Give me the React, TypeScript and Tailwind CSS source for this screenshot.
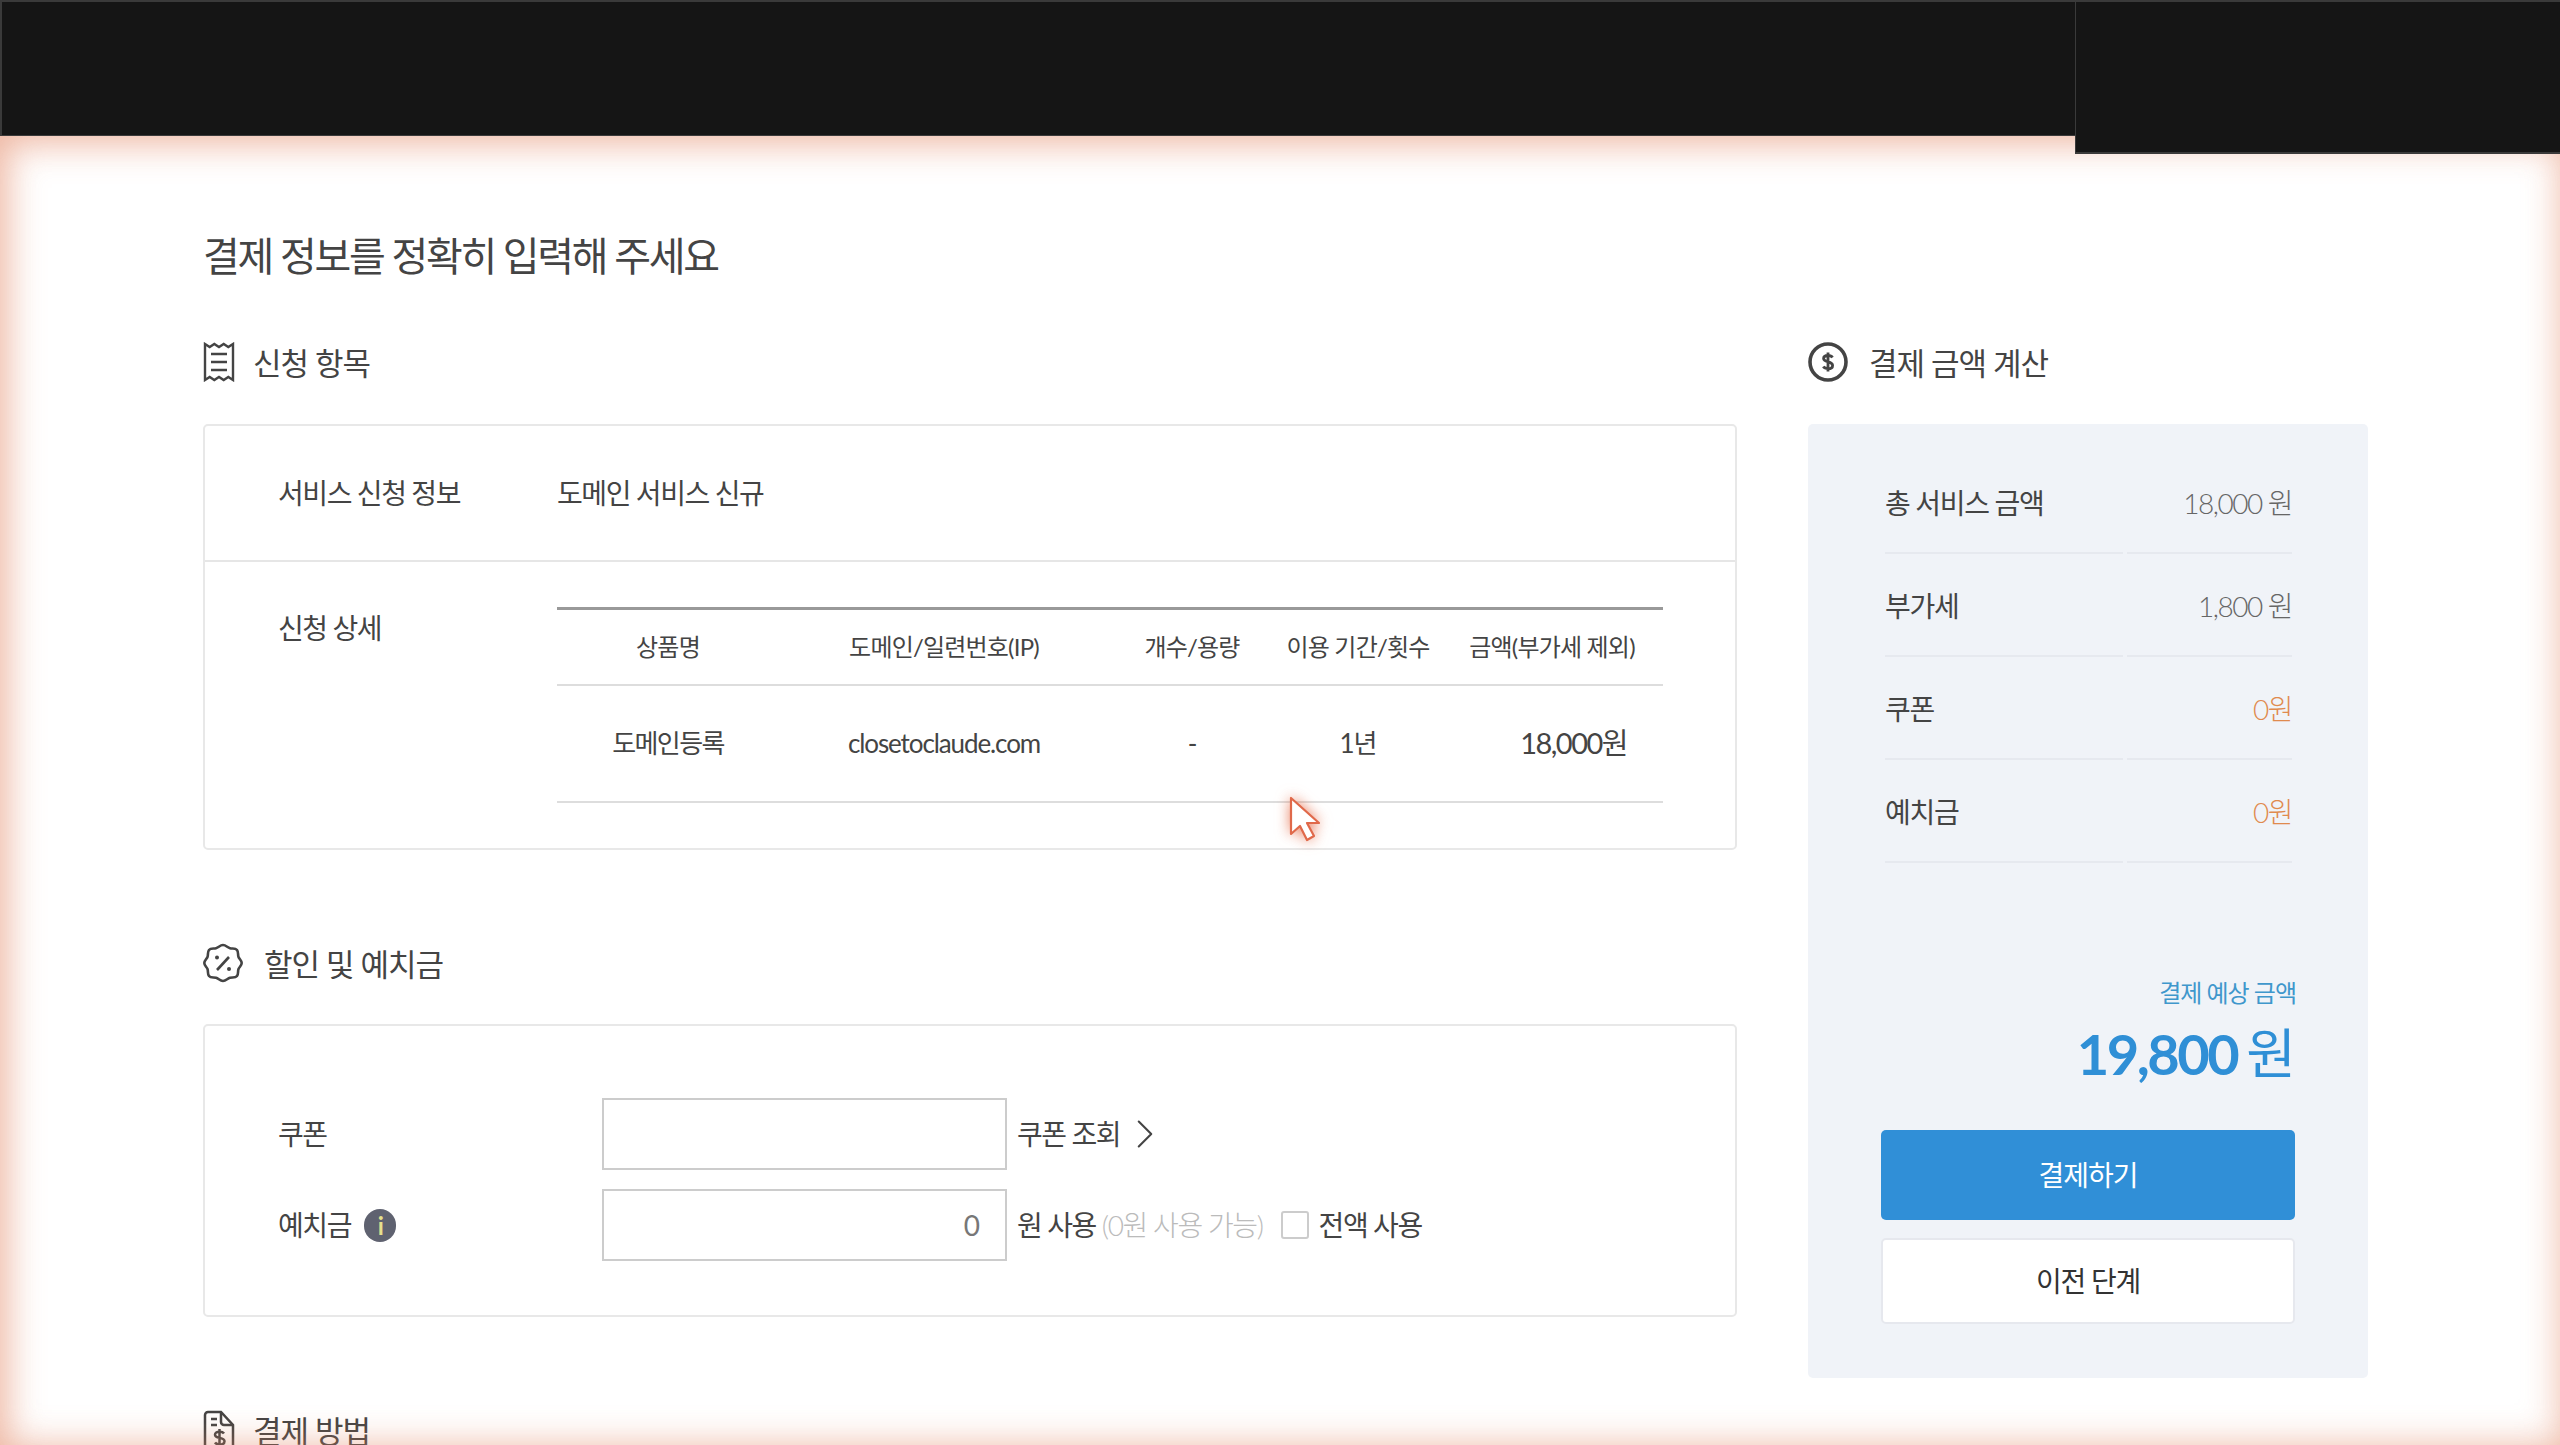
import { ChevronRight } from 'lucide-react'

function ReceiptIcon() {
  return (
    <svg width="32" height="40" viewBox="0 0 32 40" fill="none" stroke="#444" strokeWidth="2.4" className="shrink-0">
      <path d="M2 2l4.700 3 4.600-3 4.700 3 4.700-3 4.600 3L30 2v36l-4.700-3-4.600 3-4.700-3-4.700 3-4.600-3L2 38z" />
      <path d="M8 12h16M8 20h16M8 28h16" />
    </svg>
  )
}

function BadgeIcon() {
  return (
    <svg width="40" height="40" viewBox="0 0 40 40" fill="none" stroke="#444" strokeWidth="2.600" className="shrink-0">
      <path d="M20 2c3 0 4.500 2.600 7 3.200 2.600.6 5.400-.4 7 1.800 1.700 2.300.6 4.700 1.500 7 .9 2.200 3.200 3.400 3.200 6s-2.300 3.800-3.200 6c-.9 2.300.2 4.700-1.500 7-1.600 2.200-4.400 1.200-7 1.800-2.500.6-4 3.200-7 3.200s-4.500-2.600-7-3.200c-2.600-.6-5.400.4-7-1.800-1.700-2.300-.6-4.700-1.500-7-.9-2.200-3.200-3.400-3.200-6s2.300-3.800 3.200-6c.9-2.300-.2-4.700 1.500-7 1.600-2.200 4.400-1.200 7-1.800C15.500 4.600 17 2 20 2z" />
      <path d="M26 14L14 27" />
      <circle cx="14" cy="14.500" r="2" fill="#444" stroke="none" />
      <circle cx="26" cy="26" r="2" fill="#444" stroke="none" />
    </svg>
  )
}

function DollarIcon() {
  return (
    <svg width="40" height="40" viewBox="0 0 40 40" fill="none" stroke="#444" className="shrink-0">
      <circle cx="20" cy="20" r="18" strokeWidth="3.600" />
      <path d="M24.500 15.500c-.8-1.300-2.400-2-4.500-2-2.600 0-4.400 1.200-4.400 3.100 0 4.300 9 2.300 9 6.800 0 2-1.900 3.300-4.600 3.300-2.100 0-3.800-.7-4.700-2.100M20 10.500v19" strokeWidth="2.800" />
    </svg>
  )
}

function BillIcon() {
  return (
    <svg width="32" height="40" viewBox="0 0 32 40" fill="none" stroke="#444" strokeWidth="2.500" className="shrink-0">
      <path d="M5 2h13l12 13v22a3 3 0 0 1-3 3H5a3 3 0 0 1-3-3V5a3 3 0 0 1 3-3z" />
      <path d="M18 2v10a3 3 0 0 0 3 3h9M8 9h6M8 15h6" />
      <path d="M21 23.500c-.8-1.200-2.500-1.800-4.500-1.800-2.700 0-4.500 1.200-4.500 3 0 4.300 9.500 2 9.500 6.500 0 2-2 3.300-4.800 3.300-2 0-3.800-.7-4.700-2M16.500 19v19" />
    </svg>
  )
}

function SectionTitle({ icon, title, gap }: { icon: React.ReactNode; title: string; gap: string }) {
  return (
    <div className={`flex items-center h-[40px] ${gap}`}>
      {icon}
      <h2 className="pt-[2px] text-[31px] leading-[40px] tracking-[-1px] text-[#444] font-normal">{title}</h2>
    </div>
  )
}

const columns = ['상품명', '도메인/일련번호(IP)', '개수/용량', '이용 기간/횟수', '금액(부가세 제외)']

function OrderCard() {
  return (
    <div className="mt-[42px] h-[426px] border-2 border-[#e8e8e8] rounded-[5px]">
      <div className="flex items-center h-[136px] border-b-2 border-[#e6e6e6] text-[28px] tracking-[-1.4px] text-[#444]">
        <div className="w-[352px] pl-[73px]">서비스 신청 정보</div>
        <div>도메인 서비스 신규</div>
      </div>
      <div className="flex items-start pt-[45px]">
        <div className="w-[352px] pl-[73px] text-[28px] leading-[42px] tracking-[-1.4px] text-[#444]">신청 상세</div>
        <table className="w-[1106px] table-fixed text-[#444]">
          <colgroup>
            <col className="w-[222px]" />
            <col className="w-[330px]" />
            <col className="w-[166px]" />
            <col className="w-[166px]" />
            <col className="w-[222px]" />
          </colgroup>
          <thead>
            <tr className="h-[76px] border-t-[3px] border-b-2 border-t-[#999] border-b-[#ddd] text-[24px] tracking-[-0.8px]">
              {columns.map((c) => (
                <th key={c} className="font-normal whitespace-nowrap">{c}</th>
              ))}
            </tr>
          </thead>
          <tbody>
            <tr className="h-[117px] border-b-2 border-[#ddd] text-[26px] tracking-[-1.1px] text-center">
              <td className="tracking-[-1.6px]">도메인등록</td>
              <td>closetoclaude.com</td>
              <td>-</td>
              <td>1년</td>
              <td className="text-right pr-[36px] text-[29px] tracking-[-1.5px]">18,000원</td>
            </tr>
          </tbody>
        </table>
      </div>
    </div>
  )
}

function DiscountCard() {
  return (
    <div className="mt-[41px] h-[293px] border-2 border-[#e8e8e8] rounded-[5px] pt-[72px] flex flex-col gap-[19px] text-[28px] tracking-[-1.4px] text-[#444]">
      <div className="flex items-center h-[72px]">
        <div className="w-[397px] pl-[73px]">쿠폰</div>
        <input className="w-[405px] h-[72px] border-2 border-[#ccc] bg-white" />
        <span className="ml-[10px]">쿠폰 조회</span>
        <ChevronRight size={50} strokeWidth={1} className="text-[#444]" />
      </div>
      <div className="flex items-center h-[72px]">
        <div className="w-[397px] pl-[73px] flex items-center gap-[13px]">
          예치금
          <span className="w-[32px] h-[33px] rounded-full bg-[#5f6270] text-[#e6e08c] text-[24px] leading-[33px] text-center font-bold">i</span>
        </div>
        <input
          defaultValue="0"
          className="w-[405px] h-[72px] border-2 border-[#ccc] bg-white text-right pr-[25px] text-[28px] text-[#777] tracking-normal"
        />
        <span className="ml-[10px]">원 사용</span>
        <span className="ml-[6px] text-[#bbb] font-light">(0원 사용 가능)</span>
        <input type="checkbox" className="ml-[18px] appearance-none w-[28px] h-[28px] border-2 border-[#ccc] rounded-[3px] bg-white" />
        <span className="ml-[10px]">전액 사용</span>
      </div>
    </div>
  )
}

const summary = [
  { label: '총 서비스 금액', value: '18,000 원', color: 'text-[#666]' },
  { label: '부가세', value: '1,800 원', color: 'text-[#666]' },
  { label: '쿠폰', value: '0원', color: 'text-[#e08a4e]' },
  { label: '예치금', value: '0원', color: 'text-[#e08a4e]' },
]

function SummaryPanel() {
  return (
    <div className="mt-[42px] h-[954px] bg-[#f0f3f8] rounded-[5px] pt-[27px] px-[73px]">
      <div className="pl-[4px] pr-[3px]">
        {summary.map((row) => (
          <div key={row.label} className="flex h-[103px] gap-[4px]">
            <div className="flex-1 flex items-center pt-[2px] border-b-2 border-[#e6e9ef] text-[28px] tracking-[-1.3px] text-[#444]">{row.label}</div>
            <div className={`w-[165px] flex items-center justify-end pt-[2px] border-b-2 border-[#e6e9ef] text-[28px] font-light tracking-[-1.5px] whitespace-nowrap ${row.color}`}>{row.value}</div>
          </div>
        ))}
      </div>
      <div className="mt-[112px] -mr-[1px] text-right text-[24px] leading-[36px] tracking-[-1px] text-[#3f97cc]">결제 예상 금액</div>
      <div className="mt-[8px] -mr-[1px] h-[70px] flex items-center justify-end gap-[9px] text-[#2f8fd6]">
        <span className="text-[56px] font-bold tracking-[-2.5px]">19,800</span>
        <span className="text-[54px] leading-[70px]">원</span>
      </div>
      <button className="mt-[41px] block w-full h-[90px] rounded-[5px] bg-[#308fd7] text-white text-[28px] tracking-[-1px]">결제하기</button>
      <button className="mt-[18px] block w-full h-[86px] rounded-[5px] bg-white border-2 border-[#e6e8ee] text-[#333] text-[28px] tracking-[-1.2px]">이전 단계</button>
    </div>
  )
}

export default function App() {
  return (
    <div className="relative w-[2560px] h-[1445px] overflow-hidden bg-white font-['Lato','Noto_Sans_CJK_KR',sans-serif]">
      {/* Header bar */}
      <header className="relative z-20 flex items-start h-[154px]">
        <div className="flex-1 h-[136px] bg-[#151515] border-t-2 border-l-2 border-b border-[#3a3a3a]" />
        <div className="w-[485px] h-[154px] bg-[#151515] border-t-2 border-l border-b-2 border-[#3a3a3a]" />
      </header>

      <main className="flex items-start gap-[71px] pl-[203px]">
        <div className="w-[1534px]">
          <h1 className="mt-[77px] h-[50px] text-[40px] leading-[50px] tracking-[-2.3px] text-[#444] font-normal">결제 정보를 정확히 입력해 주세요</h1>

          <div className="mt-[61px]">
            <SectionTitle icon={<ReceiptIcon />} title="신청 항목" gap="gap-[18px]" />
          </div>
          <OrderCard />

          <div className="mt-[93px]">
            <SectionTitle icon={<BadgeIcon />} title="할인 및 예치금" gap="gap-[21px]" />
          </div>
          <DiscountCard />

          <div className="mt-[93px]">
            <SectionTitle icon={<BillIcon />} title="결제 방법" gap="gap-[18px]" />
          </div>
        </div>

        <aside className="w-[560px]">
          <div className="mt-[188px]">
            <SectionTitle icon={<DollarIcon />} title="결제 금액 계산" gap="gap-[21px]" />
          </div>
          <SummaryPanel />
        </aside>
      </main>

      {/* Recording glow round the viewport */}
      <div className="absolute inset-x-0 top-[136px] bottom-0 z-10 pointer-events-none shadow-[inset_8px_8px_36px_rgba(226,132,98,0.46),inset_-2px_-2px_36px_rgba(226,132,98,0.28)]" />

      {/* Cursor */}
      <svg width="36" height="48" viewBox="0 0 36 48" className="absolute left-[1288px] top-[795px] z-30 drop-shadow-[0_0_7px_rgba(226,90,50,0.75)]">
        <path d="M3 3v36l9-8 7 14 7-4-7-13h12z" fill="#fff" stroke="#e0694a" strokeWidth="2.200" strokeLinejoin="round" />
      </svg>
    </div>
  )
}
